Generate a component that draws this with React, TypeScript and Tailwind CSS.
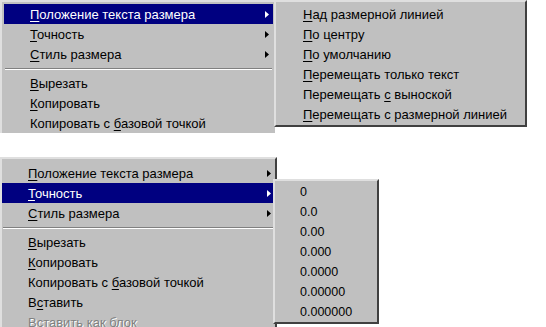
import React from "react";

type Item =
  | { kind: "item"; pre?: string; u?: string; post?: string; arrow?: boolean; active?: boolean; disabled?: boolean }
  | { kind: "sep" };

function Arrow({ white }: { white?: boolean }) {
  return (
    <svg width="4" height="7" viewBox="0 0 4 7" className="shrink-0">
      <path d="M0 0 L4 3.5 L0 7 Z" fill={white ? "#ffffff" : "#000000"} />
    </svg>
  );
}

function Row({ it, pl }: { it: Extract<Item, { kind: "item" }>; pl: string }) {
  const base = it.active ? "bg-[#000080] text-white" : it.disabled ? "text-[#808080] [text-shadow:1px_1px_0_#ffffff]" : "text-black";
  return (
    <div className={`h-[20px] flex items-center justify-between pr-[4px] ${pl} ${base}`}>
      <span className="whitespace-pre leading-none">
        {it.pre}
        {it.u ? <span className="underline underline-offset-[2px] decoration-1">{it.u}</span> : null}
        {it.post}
      </span>
      {it.arrow ? <Arrow white={it.active} /> : null}
    </div>
  );
}

function Sep() {
  return (
    <div className="h-[9px] flex flex-col justify-center px-[1px]">
      <div className="h-px bg-[#808080]" />
      <div className="h-px bg-white" />
    </div>
  );
}

function List({ items, pl }: { items: Item[]; pl: string }) {
  return (
    <>
      {items.map((it, i) =>
        it.kind === "sep" ? <Sep key={i} /> : <Row key={i} it={it} pl={pl} />
      )}
    </>
  );
}

const mainTop: Item[] = [
  { kind: "item", u: "П", post: "оложение текста размера", arrow: true, active: true },
  { kind: "item", u: "Т", post: "очность", arrow: true },
  { kind: "item", u: "С", post: "тиль размера", arrow: true },
  { kind: "sep" },
  { kind: "item", u: "В", post: "ырезать" },
  { kind: "item", u: "К", post: "опировать" },
  { kind: "item", pre: "Копировать с ", u: "б", post: "азовой точкой" },
];

const subTop: Item[] = [
  { kind: "item", u: "Н", post: "ад размерной линией" },
  { kind: "item", u: "П", post: "о центру" },
  { kind: "item", u: "П", post: "о умолчанию" },
  { kind: "item", u: "П", post: "еремещать только текст" },
  { kind: "item", pre: "Перемещать ", u: "с", post: " выноской" },
  { kind: "item", u: "П", post: "еремещать с размерной линией" },
];

const mainBottom: Item[] = [
  { kind: "item", u: "П", post: "оложение текста размера", arrow: true },
  { kind: "item", u: "Т", post: "очность", arrow: true, active: true },
  { kind: "item", u: "С", post: "тиль размера", arrow: true },
  { kind: "sep" },
  { kind: "item", u: "В", post: "ырезать" },
  { kind: "item", u: "К", post: "опировать" },
  { kind: "item", pre: "Копировать с ", u: "б", post: "азовой точкой" },
  { kind: "item", pre: "В", u: "с", post: "тавить" },
  { kind: "item", pre: "Вставить как блок", disabled: true },
];

const subBottom: Item[] = ["0", "0.0", "0.00", "0.000", "0.0000", "0.00000", "0.000000"].map(
  (t) => ({ kind: "item" as const, pre: t })
);

export default function App() {
  return (
    <div
      className="w-[546px] h-[327px] overflow-hidden bg-white flex flex-col text-[13px]"
      style={{ fontFamily: '"Liberation Sans", Arial, sans-serif' }}
    >
      {/* top screenshot */}
      <div className="relative h-[133px] shrink-0">
        <div className="w-[275px] h-[133px] bg-[#c0c0c0] border-t-2 border-l-2 border-t-[#dfdfdf] border-l-[#dfdfdf] pt-[2px] pl-[2px] pr-[2px]">
          <List items={mainTop} pl="pl-[26px]" />
        </div>
        <div className="absolute left-[274px] top-0 w-[253px] h-[127px] bg-[#c0c0c0] border-2 border-t-[#dfdfdf] border-l-[#dfdfdf] border-r-[#404040] border-b-[#404040] pt-[2px] px-[2px]">
          <List items={subTop} pl="pl-[25px]" />
        </div>
      </div>

      {/* bottom screenshot */}
      <div className="relative mt-[24px] flex-1">
        <div className="w-[277px] h-[200px] bg-[#c0c0c0] border-t-2 border-l-2 border-r-2 border-t-[#dfdfdf] border-l-[#dfdfdf] border-r-[#404040] pt-[4px] px-[0px]">
          <List items={mainBottom} pl="pl-[26px]" />
        </div>
        <div className="absolute left-[273px] top-[22px] w-[106px] h-[145px] bg-[#c0c0c0] border-2 border-t-[#dfdfdf] border-l-[#dfdfdf] border-r-[#404040] border-b-[#404040] pt-[1px] px-[2px] text-[12.5px]">
          <List items={subBottom} pl="pl-[23px]" />
        </div>
      </div>
    </div>
  );
}
